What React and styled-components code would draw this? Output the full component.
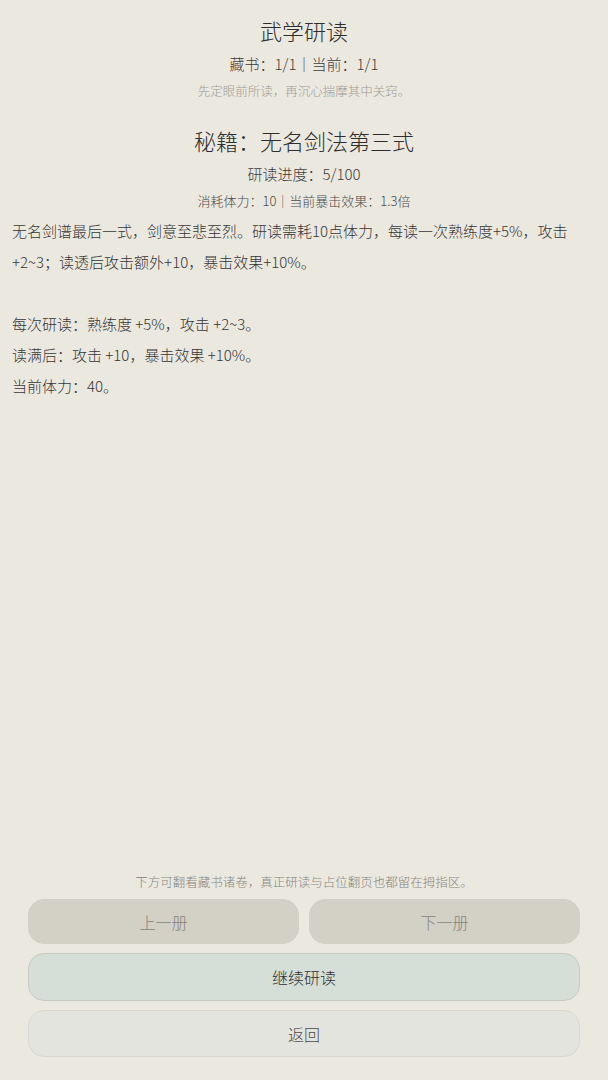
import styled, { createGlobalStyle } from "styled-components";

const GlobalStyle = createGlobalStyle`
  html, body {
    margin: 0;
    padding: 0;
    background: #ebe8df;
  }
  body {
    font-family: "Noto Sans CJK SC", "Noto Sans", sans-serif;
    font-weight: 300;
    color: #3a3a3a;
  }
`;

const Page = styled.div`
  min-height: 100vh;
  box-sizing: border-box;
  display: flex;
  flex-direction: column;
  padding: 12px 12px 23px;
`;

const Header = styled.header`
  display: flex;
  flex-direction: column;
  align-items: center;
`;

const Title = styled.h1`
  margin: ${(p) => p.$top || 0}px 0 0;
  font-size: 22px;
  font-weight: 300;
  line-height: 36px;
  color: #2e2e2e;
`;

const Meta = styled.div`
  font-size: ${(p) => p.$size || 15}px;
  line-height: ${(p) => p.$line || 26}px;
  color: ${(p) => p.$color || "#3c3c3c"};
  margin-top: ${(p) => p.$top || 0}px;
`;

const Body = styled.div`
  margin-top: 3px;
  font-size: 15px;
  line-height: 31px;
  color: #363636;
`;

const Para = styled.p`
  margin: 0;
  min-height: 31px;
`;

const Footer = styled.footer`
  margin-top: auto;
  padding: 0 16px;
  display: flex;
  flex-direction: column;
  align-items: stretch;
`;

const FooterHint = styled.div`
  text-align: center;
  font-size: 12.5px;
  line-height: 18px;
  color: #85857f;
  margin-bottom: 8px;
`;

const ButtonRow = styled.div`
  display: grid;
  grid-template-columns: 1fr 1fr;
  gap: 10px;
`;

const tones = {
  muted: { bg: "#d3d0c6", border: "#d3d0c6", color: "#85837d" },
  primary: { bg: "#d6dfd7", border: "#c7cbc3", color: "#2e2e2e" },
  plain: { bg: "#e4e4de", border: "#d8d8d0", color: "#4a4a4a" },
};

const Button = styled.button`
  height: ${(p) => p.$h || 47}px;
  margin-top: ${(p) => p.$top || 0}px;
  border-radius: 16px;
  border: 1px solid ${(p) => tones[p.$tone].border};
  background: ${(p) => tones[p.$tone].bg};
  color: ${(p) => tones[p.$tone].color};
  font-family: inherit;
  font-weight: 300;
  font-size: 16px;
  cursor: pointer;
`;

export default function App() {
  return (
    <Page>
      <GlobalStyle />
      <Header>
        <Title>武学研读</Title>
        <Meta $top={3}>藏书：1/1｜当前：1/1</Meta>
        <Meta $size={12.5} $line={24} $color="#9c9c96" $top={2}>
          先定眼前所读，再沉心揣摩其中关窍。
        </Meta>
        <Title $top={19}>秘籍：无名剑法第三式</Title>
        <Meta $top={1} $line={30}>研读进度：5/100</Meta>
        <Meta $size={13} $line={22} $color="#4a4a4a" $top={1}>
          消耗体力：10｜当前暴击效果：1.3倍
        </Meta>
      </Header>
      <Body>
        <Para>
          无名剑谱最后一式，剑意至悲至烈。研读需耗10点体力，每读一次熟练度+5%，攻击+2~3；读透后攻击额外+10，暴击效果+10%。
        </Para>
        <Para />
        <Para>每次研读：熟练度 +5%，攻击 +2~3。</Para>
        <Para>读满后：攻击 +10，暴击效果 +10%。</Para>
        <Para>当前体力：40。</Para>
      </Body>
      <Footer>
        <FooterHint>下方可翻看藏书诸卷，真正研读与占位翻页也都留在拇指区。</FooterHint>
        <ButtonRow>
          <Button $tone="muted" $h={45}>上一册</Button>
          <Button $tone="muted" $h={45}>下一册</Button>
        </ButtonRow>
        <Button $tone="primary" $h={48} $top={9}>继续研读</Button>
        <Button $tone="plain" $h={47} $top={9}>返回</Button>
      </Footer>
    </Page>
  );
}
